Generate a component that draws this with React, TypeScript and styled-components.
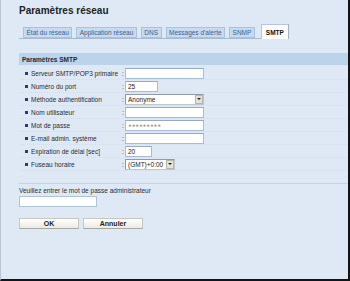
import React from "react";
import styled, { createGlobalStyle } from "styled-components";

const Global = createGlobalStyle`
  html, body { margin: 0; padding: 0; background: #dfe9f5; }
  * { box-sizing: border-box; }
  body { font-family: "Liberation Sans", Arial, sans-serif; }
`;

const Frame = styled.div`
  width: 350px;
  height: 281px;
  background: #dfe9f5;
  border-left: 1px solid #b6c4d4;
  border-right: 2px solid #141414;
  border-bottom: 2px solid #141414;
  padding: 4px 0 0 18px;
  display: flex;
  flex-direction: column;
  overflow: hidden;
`;

const Title = styled.h1`
  margin: 0;
  font-size: 10px;
  line-height: 14px;
  font-weight: bold;
  color: #222;
`;

const Tabs = styled.div`
  margin-top: 7px;
  width: 270px;
  height: 14px;
  display: flex;
  align-items: flex-end;
  gap: 4px;
  padding-left: 4px;
  border-bottom: 1px solid #a7bad2;
`;

const Tab = styled.div<{ $active?: boolean }>`
  height: ${(p) => (p.$active ? "15px" : "11px")};
  margin-bottom: ${(p) => (p.$active ? "-1px" : "0")};
  margin-left: ${(p) => (p.$active ? "2px" : "0")};
  padding: 0 ${(p) => (p.$active ? "4px" : "2.5px")};
  display: flex;
  align-items: center;
  font-size: 6.5px;
  font-weight: ${(p) => (p.$active ? "bold" : "normal")};
  color: ${(p) => (p.$active ? "#111" : "#3d5f8f")};
  background: ${(p) => (p.$active ? "#ffffff" : "#c6daf0")};
  border: 1px solid ${(p) => (p.$active ? "#b7c6d8" : "#a9c2de")};
  border-right-color: ${(p) => (p.$active ? "#9fb0c4" : "#a9c2de")};
  border-bottom: ${(p) => (p.$active ? "none" : "1px solid #a9c2de")};
  white-space: nowrap;
`;

const SectionBar = styled.div`
  margin-top: 14px;
  height: 12px;
  background: #bcd3ec;
  display: flex;
  align-items: center;
  padding-left: 3px;
  font-size: 6.5px;
  font-weight: bold;
  color: #1d2a3a;
`;

const Rows = styled.div`
  margin-top: 2px;
  display: flex;
  flex-direction: column;
`;

const Row = styled.div`
  height: 13px;
  display: flex;
  align-items: center;
  padding-left: 6px;
  border-bottom: 1px dotted #d3deeb;
`;

const Bullet = styled.span`
  width: 3px;
  height: 3px;
  background: #243f78;
  margin-right: 3px;
  flex: none;
`;

const Label = styled.span`
  width: 91px;
  font-size: 6.5px;
  color: #2b2b2b;
  white-space: nowrap;
`;

const Colon = styled.span`
  width: 3px;
  font-size: 6.5px;
  color: #333;
  flex: none;
`;

const Field = styled.input<{ $w: number }>`
  width: ${(p) => p.$w}px;
  height: 11px;
  padding: 0 2px;
  font-family: "Liberation Sans", Arial, sans-serif;
  font-size: 6.5px;
  color: #222;
  background: #fff;
  border: 1px solid #a9bcd3;
  border-top-color: #95aac4;
  outline: none;
`;

const Masked = styled(Field)`
  font-family: "DejaVu Sans", sans-serif;
  font-size: 4.6px;
  color: #8c7d74;
  letter-spacing: -0.2px;
`;

const SelectBox = styled.div<{ $w: number }>`
  width: ${(p) => p.$w}px;
  height: 11px;
  display: flex;
  align-items: center;
  background: #fff;
  border: 1px solid #8f9aa6;
  border-right-color: #c0c6cc;
  border-bottom-color: #c0c6cc;
`;

const SelectText = styled.span`
  flex: 1;
  padding-left: 2px;
  font-size: 6.5px;
  color: #222;
`;

const Arrow = styled.span`
  width: 8px;
  height: 9px;
  background: #e4e1da;
  border: 1px solid #b9b6ae;
  display: flex;
  align-items: center;
  justify-content: center;
  &::after {
    content: "";
    border-left: 2px solid transparent;
    border-right: 2px solid transparent;
    border-top: 2px solid #222;
  }
`;

const Separator = styled.div`
  margin-top: 12px;
  height: 1px;
  background: #c6d3e2;
`;

const Prompt = styled.div`
  margin-top: 2px;
  font-size: 6.5px;
  line-height: 9px;
  color: #2b2b2b;
`;

const AdminInput = styled(Field)`
  margin-top: 1px;
  border-color: #b3c3d6;
`;

const Buttons = styled.div`
  margin-top: 11px;
  display: flex;
  gap: 4px;
`;

const Button = styled.button`
  width: 60px;
  height: 11px;
  padding: 0;
  font-family: "Liberation Sans", Arial, sans-serif;
  font-size: 7px;
  font-weight: bold;
  color: #222;
  background: linear-gradient(#ffffff, #eceae4);
  border: 1px solid #c8c6c0;
  border-bottom-color: #aaa8a2;
  display: flex;
  align-items: center;
  justify-content: center;
`;

const tabs = [
  "État du réseau",
  "Application réseau",
  "DNS",
  "Messages d'alerte",
  "SNMP",
  "SMTP",
];

export default function App() {
  return (
    <>
      <Global />
      <Frame>
        <Title>Paramètres réseau</Title>
        <Tabs>
          {tabs.map((t) => (
            <Tab key={t} $active={t === "SMTP"}>
              {t}
            </Tab>
          ))}
        </Tabs>
        <SectionBar>Paramètres SMTP</SectionBar>
        <Rows>
          <Row>
            <Bullet />
            <Label>Serveur SMTP/POP3 primaire</Label>
            <Colon>:</Colon>
            <Field $w={79} defaultValue="" />
          </Row>
          <Row>
            <Bullet />
            <Label>Numéro du port</Label>
            <Colon>:</Colon>
            <Field $w={33} defaultValue="25" />
          </Row>
          <Row>
            <Bullet />
            <Label>Méthode authentification</Label>
            <Colon>:</Colon>
            <SelectBox $w={79}>
              <SelectText>Anonyme</SelectText>
              <Arrow />
            </SelectBox>
          </Row>
          <Row>
            <Bullet />
            <Label>Nom utilisateur</Label>
            <Colon>:</Colon>
            <Field $w={79} defaultValue="" />
          </Row>
          <Row>
            <Bullet />
            <Label>Mot de passe</Label>
            <Colon>:</Colon>
            <Masked $w={79} defaultValue="∗∗∗∗∗∗∗∗∗" />
          </Row>
          <Row>
            <Bullet />
            <Label>E-mail admin. système</Label>
            <Colon>:</Colon>
            <Field $w={79} defaultValue="" />
          </Row>
          <Row>
            <Bullet />
            <Label>Expiration de délai [sec]</Label>
            <Colon>:</Colon>
            <Field $w={27} defaultValue="20" />
          </Row>
          <Row>
            <Bullet />
            <Label>Fuseau horaire</Label>
            <Colon>:</Colon>
            <SelectBox $w={50}>
              <SelectText>(GMT)+0:00</SelectText>
              <Arrow />
            </SelectBox>
          </Row>
        </Rows>
        <Separator />
        <Prompt>Veuillez entrer le mot de passe administrateur</Prompt>
        <AdminInput $w={78} type="password" defaultValue="" />
        <Buttons>
          <Button>OK</Button>
          <Button>Annuler</Button>
        </Buttons>
      </Frame>
    </>
  );
}
